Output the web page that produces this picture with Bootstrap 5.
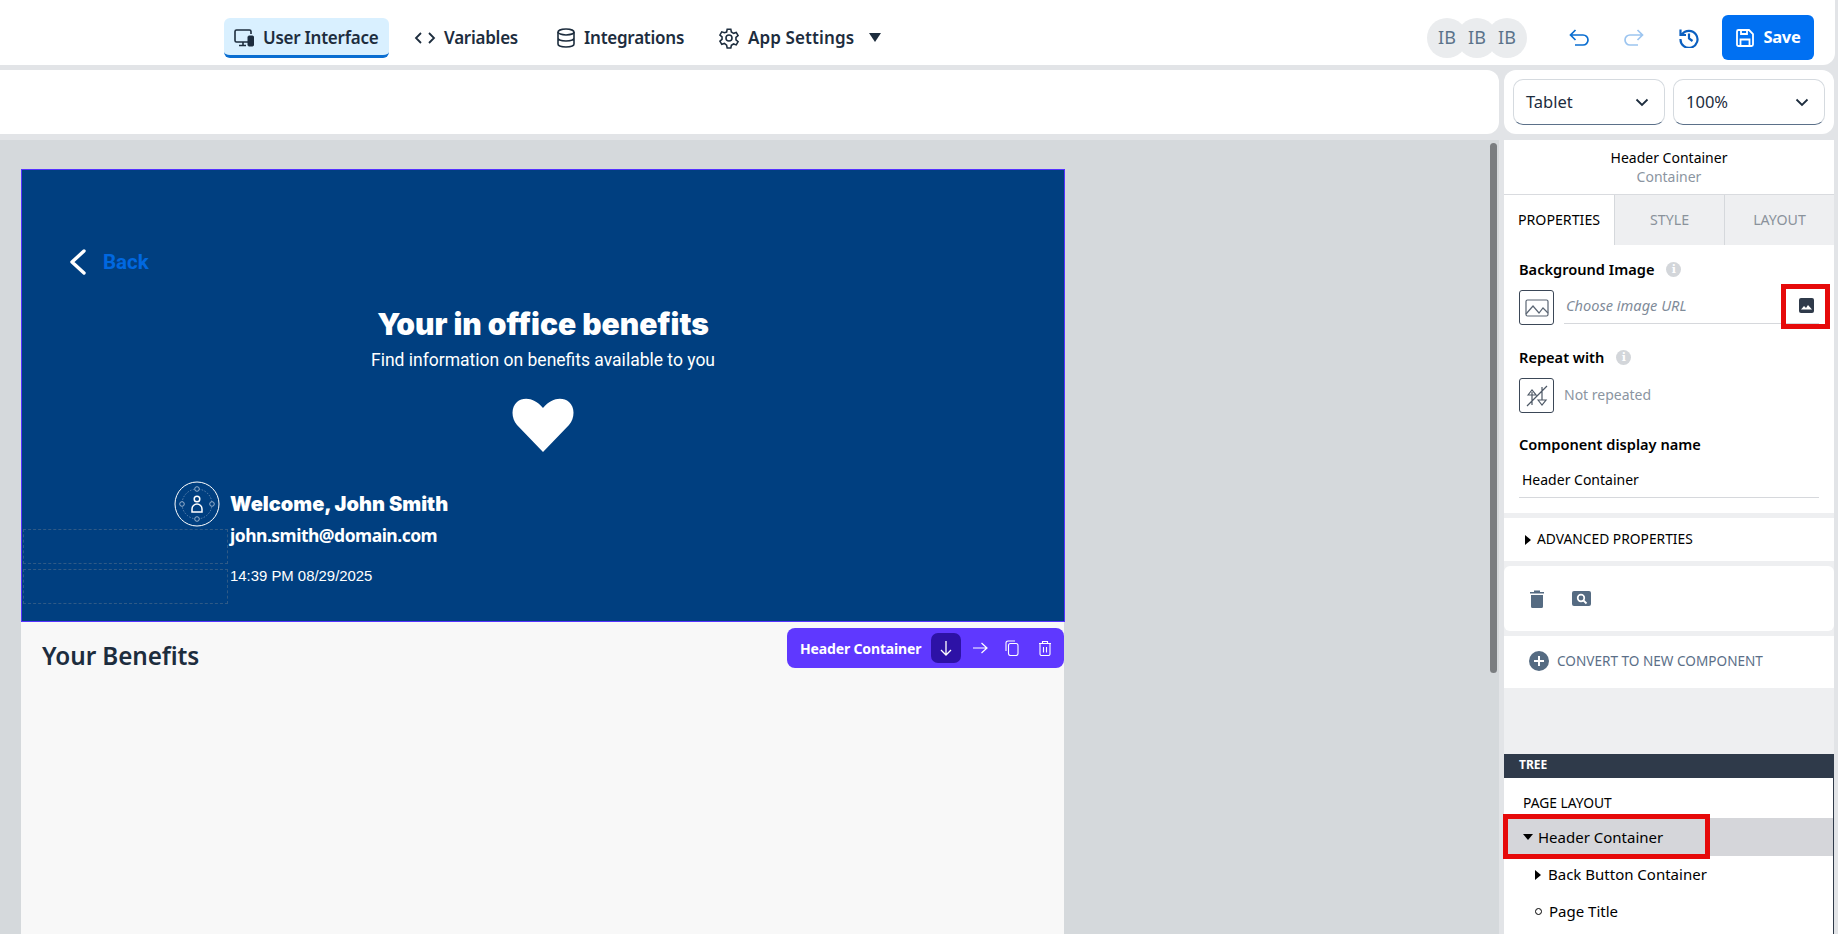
<!DOCTYPE html>
<html lang="en"><head><meta charset="utf-8"><title>Builder</title>
<link href="https://cdn.jsdelivr.net/npm/bootstrap@5.3.0/dist/css/bootstrap.min.css" rel="stylesheet">
<style>
html,body{height:100%;overflow:hidden}
body{background:#e2e4e7;font-family:"Noto Sans",sans-serif;color:#1d2d3e;font-size:14px}
.shell{width:1838px;height:934px;overflow:hidden}
.topbar{height:65px;width:1835px;background:#fff;border-radius:0 0 12px 0;padding:10px 21px 0 224px;flex:none}
.navtab{height:40px;font-size:17px;font-weight:600;letter-spacing:-.25px;color:#1d2d3e;white-space:nowrap}
.navtab.on{background:#d9f0ff;border-radius:6px;border-bottom:3px solid #0a6ed1;width:165px;padding:3px 0 0 9px}
.t2{margin-left:25px}.t3{margin-left:38px}.t4{margin-left:34px}
.t4 span{letter-spacing:.1px}
.caret-d{width:0;height:0;border:6px solid transparent;border-top:9px solid #1d2d3e;border-bottom:0;margin-left:15px}
.avas{margin-right:42px}
.ava{width:40px;height:40px;border-radius:50%;background:#eaecee;color:#5b738b;font-size:18px;margin-left:-10px}
.ava:first-child{margin-left:0}
.savebtn{width:92px;height:45px;background:#0070f2;color:#fff;border:0;border-radius:6px;font-weight:700;font-size:16.5px;letter-spacing:-.3px;margin-left:23px}
.tool{width:20px;height:20px;margin-left:35px}
.tool:first-of-type{margin-left:0}
.subrow{height:64px;margin-top:5px;flex:none}
.subleft{width:1499px;background:#fff;border-radius:0 12px 12px 0}
.subright{width:330px;margin-left:5px;background:#fff;border-radius:12px;padding:9px;gap:8px}
.selbox{width:152px;height:46px;border:1px solid #d5dadf;border-bottom:1px solid #5b7089;border-radius:10px;font-size:16.5px;padding:0 15px 0 12px;color:#1d2d3e;background:#fff}
.mainrow{height:794px;margin-top:6px;flex:none}
.canvas{width:1499px;background:#d5d9dc;position:relative;overflow:hidden}
.scroller{position:absolute;left:1490px;top:3px;width:7px;height:530px;background:#7a7d80;border-radius:4px}
.pagebox{width:1043px;margin-left:21px;margin-top:29px;background:#f8f8f8;height:766px;position:relative}
.hero{height:453px;width:1044px;background:#003f80;border:1px solid #5533ff;color:#fff;position:relative;text-align:center;padding-top:81px}
.backrow{position:absolute;left:47px;top:79px;gap:16px;color:#0068e0;font:700 20.5px/24px Roboto,sans-serif}
.herotitle{font:900 30px/34px Inter,sans-serif;margin-top:56px}
.herosub{font:400 17.5px/24px Roboto,sans-serif;margin-top:7px}
.heartwrap{margin-top:26px;height:54px}
.who{position:absolute;left:152px;top:311px;text-align:left;gap:10px}
.wname{font:900 20px/24px Inter,sans-serif;margin-top:11px}
.wmail{font:700 17.5px/24px "Noto Sans",sans-serif;margin-top:7px;letter-spacing:-.5px}
.wtime{font:400 14.9px/20px "Liberation Sans",sans-serif;margin-top:19px}
.dash{position:absolute;left:1px;width:205px;height:35px;border:1px dashed #2f5a86}
.dash1{top:359px}.dash2{top:399px}
.bentitle{font-weight:600;font-size:24.3px;line-height:32px;padding:18px 0 0 21px;color:#1d2d3e;letter-spacing:-.1px}
.ctxbar{position:absolute;left:766px;top:459px;width:277px;height:40px;background:#5f38ff;border-radius:8px;color:#fff;font-weight:700;font-size:14px;padding-left:13px;letter-spacing:-.15px}
.ctxon{width:30px;height:30px;background:#2d12a6;border-radius:7px;margin-left:10px}
.ctxic{margin-left:11px}
.ctxc{margin-left:17px}.ctxd{margin-left:19px}
.panel{width:330px;margin-left:5px;background:#eeeff1;height:794px;position:relative}
.phead{height:55px;background:#fff;text-align:center;font-size:14px;line-height:19px;padding-top:8px;border-bottom:1px solid #d9dbdf;color:#000}
.phead div+div{color:#8b95a1}
.ptabs{height:50px}
.ptab{width:110px;background:#eeeff1;color:#8a929b;font-size:14.2px;border-left:1px solid #d5d8dc;padding-bottom:1px}
.ptab.on{background:#fff;color:#000;border-left:0}
.pbody{height:268px;background:#fff;padding:15px 15px 0}
.plabel{font-weight:600;font-size:14.6px;line-height:18px;padding-bottom:2px;color:#000}
.infodot{width:15px;height:15px;border-radius:50%;background:#d3d6da;color:#fff;font:700 11px/15px "DejaVu Serif",serif;text-align:center;margin-left:12px}
.iconbox{width:35px;height:35px;border:1px solid #3b4757;border-radius:3px;flex:none}
.frow{height:35px;margin-top:10px}
.fieldline{border-bottom:1px solid #d6d8dc;margin-left:10px;flex:1;height:34px;font-style:italic;color:#7f8b99;font-size:14.6px;padding:0 5px 2px 2px}
.notrep{color:#8b95a1;margin-left:10px;font-size:14px;padding-bottom:3px}
.lab2{margin-top:23px}.lab3{margin-top:22px}
.dispname{height:43px;border-bottom:1px solid #d6d8dc;padding:15px 0 0 3px;color:#000;line-height:20px}
.sect{background:#fff;margin-top:5px}
.s1{height:43px;padding-left:21px;font-size:13.8px;color:#000;gap:6px}
.s2{height:65px;border-radius:6px;padding-left:26px;gap:28px}
.s3{height:52px;padding:0 0 2px 25px;gap:8px;font-size:13.6px;color:#5b6f88}
.spacer{height:66px}
.treehd{height:24px;background:#2f3a4a;color:#fff;font-weight:700;font-size:12px;padding:0 0 2px 15px}
.treebody{height:156px;background:#fff;border-right:1px solid #2f3a4a;color:#000;font-size:15px}
.treelbl{font-size:13.8px;height:40px;padding:16px 0 0 19px;line-height:18px}
.trow{height:38px}
.trow.on{background:#d5d6da;padding-left:19px;gap:5px}
.tr2{height:37px;padding-left:31px;gap:7px}
.tri-r{width:0;height:0;border:5px solid transparent;border-left:6px solid #000;border-right:0}
.tri-d{width:0;height:0;border:5px solid transparent;border-top:6px solid #000;border-bottom:0}
.ring{width:7px;height:7px;border:1.5px solid #000;border-radius:50%}
.redbox{position:absolute;border:5px solid #e60a0a;pointer-events:none}
.rb1{left:277px;top:144px;width:49px;height:45px}
.rb2{left:-1px;top:674px;width:207px;height:45px}
</style></head>
<body><div class="shell d-flex flex-column">
<div class="topbar d-flex align-items-center">
 <div class="navtab on d-flex align-items-center gap-2">
  <svg width="22" height="22" viewBox="0 0 22 22" fill="none" stroke="#1d2d3e" stroke-width="1.6"><path d="M15 15H3.500a1.500 1.500 0 0 1-1.500-1.500v-9A1.500 1.500 0 0 1 3.500 3h13A1.500 1.500 0 0 1 18 4.500V7"/><path d="M6 18.500h7M10 15v3"/><rect x="15" y="9" width="5.500" height="10" rx="1" fill="#1d2d3e" stroke-width="1"/></svg>
  <span>User Interface</span></div>
 <div class="navtab t2 d-flex align-items-center gap-2"><svg width="22" height="22" viewBox="0 0 22 22" fill="none" stroke="#1d2d3e" stroke-width="1.8"><path d="M7 6l-5 5 5 5M15 6l5 5-5 5"/></svg><span>Variables</span></div>
 <div class="navtab t3 d-flex align-items-center gap-2"><svg width="20" height="22" viewBox="0 0 20 22" fill="none" stroke="#1d2d3e" stroke-width="1.6"><ellipse cx="10" cy="5" rx="8" ry="3"/><path d="M2 5v12c0 1.700 3.600 3 8 3s8-1.300 8-3V5M2 11c0 1.700 3.600 3 8 3s8-1.300 8-3"/></svg><span>Integrations</span></div>
 <div class="navtab t4 d-flex align-items-center gap-2"><svg width="22" height="22" viewBox="0 0 24 24" fill="none" stroke="#1d2d3e" stroke-width="1.7"><circle cx="12" cy="12" r="3.300"/><path d="M10 2.500h4l.6 3 2.400 1.400 2.900-1 2 3.400-2.300 2 0 2.800 2.300 2-2 3.400-2.900-1-2.400 1.400-.6 3h-4l-.6-3L7 17.900l-2.900 1-2-3.400 2.300-2v-2.800l-2.300-2 2-3.400 2.900 1L9.400 5.500z"/></svg><span>App Settings</span></div>
 <div class="caret-d"></div>
 <div class="ms-auto d-flex align-items-center">
  <div class="avas d-flex"><div class="ava d-flex align-items-center justify-content-center">IB</div><div class="ava d-flex align-items-center justify-content-center">IB</div><div class="ava d-flex align-items-center justify-content-center">IB</div></div>
  <svg class="tool" viewBox="0 0 20 20" fill="none" stroke="#0a6ed1" stroke-width="1.700"><path d="M6.500 2L1.500 7l5 5M1.500 7H14a4.700 4.700 0 0 1 0 10H6"/></svg>
  <svg class="tool" viewBox="0 0 20 20" fill="none" stroke="#9cc5f0" stroke-width="1.700"><path d="M13.500 2l5 5-5 5M18.500 7H6a4.700 4.700 0 0 0 0 10h8"/></svg>
  <svg class="tool" viewBox="0 0 20 20" fill="none" stroke="#0a5fc0" stroke-width="2.200"><path d="M3 6.500A8.500 8.500 0 1 1 1.500 11M1.500 1.500V7H7M10 5.500V10.500l3.500 2.500"/></svg>
  <button class="savebtn d-flex align-items-center justify-content-center gap-2"><svg width="20" height="20" viewBox="0 0 20 20" fill="none" stroke="#fff" stroke-width="1.800"><path d="M2 3.500A1.500 1.500 0 0 1 3.500 2H14l4 4v10.500a1.500 1.500 0 0 1-1.500 1.500h-13A1.500 1.500 0 0 1 2 16.500z"/><path d="M5.500 18v-6.500h9V18M6 2v4h6V2"/></svg>Save</button>
 </div>
</div>
<div class="subrow d-flex">
 <div class="subleft"></div>
 <div class="subright d-flex align-items-center">
  <div class="selbox d-flex align-items-center justify-content-between">Tablet<svg width="14" height="9" viewBox="0 0 14 9" fill="none" stroke="#1d2d3e" stroke-width="1.800"><path d="M1.500 1.500L7 7l5.500-5.500"/></svg></div>
  <div class="selbox d-flex align-items-center justify-content-between">100%<svg width="14" height="9" viewBox="0 0 14 9" fill="none" stroke="#1d2d3e" stroke-width="1.800"><path d="M1.500 1.500L7 7l5.500-5.500"/></svg></div>
 </div>
</div>
<div class="mainrow d-flex">
 <div class="canvas">
  <div class="scroller"></div>
  <div class="pagebox">
   <div class="hero">
    <div class="backrow d-flex align-items-center"><svg width="18" height="26" viewBox="0 0 18 26" fill="none" stroke="#fff" stroke-width="3.400" stroke-linecap="round" stroke-linejoin="round"><path d="M15 2L3 13l12 11"/></svg><span>Back</span></div>
    <div class="herotitle">Your in office benefits</div>
    <div class="herosub">Find information on benefits available to you</div>
    <div class="heartwrap"><svg width="62" height="54" viewBox="0 0 62 54"><path fill="#fff" d="M31 54L5 27C-1 20-1 9 5 4c6-5 17-5 26 6C40-1 51-1 57 4c6 5 6 16 0 23z"/></svg></div>
    <div class="dash dash1"></div><div class="dash dash2"></div>
    <div class="who d-flex">
     <svg width="46" height="46" viewBox="0 0 46 46" fill="none" stroke="#fff"><circle cx="23" cy="23" r="22" stroke-width="1"/><circle cx="23" cy="23" r="15" stroke="#7e9cbf" stroke-width=".7" stroke-dasharray="1.500 1.500"/><circle cx="23" cy="8" r="2.300" stroke="#b9cadd" fill="#003f80" stroke-width=".8"/><circle cx="23" cy="38" r="2.300" stroke="#b9cadd" fill="#003f80" stroke-width=".8"/><circle cx="8" cy="23" r="2.300" stroke="#b9cadd" fill="#003f80" stroke-width=".8"/><circle cx="38" cy="23" r="2.300" stroke="#b9cadd" fill="#003f80" stroke-width=".8"/><circle cx="23" cy="18" r="2.800" stroke-width="1.500"/><path d="M18 31v-3a5 5 0 0 1 10 0v3z" stroke-width="1.500"/></svg>
     <div><div class="wname">Welcome, John Smith</div><div class="wmail">john.smith@domain.com</div><div class="wtime">14:39 PM 08/29/2025</div></div>
    </div>
   </div>
   <div class="bentitle">Your Benefits</div>
   <div class="ctxbar d-flex align-items-center"><span>Header Container</span>
    <div class="ctxon d-flex align-items-center justify-content-center"><svg width="14" height="16" viewBox="0 0 14 16" fill="none" stroke="#fff" stroke-width="1.300"><path d="M7 1v14M2 10l5 5 5-5"/></svg></div>
    <svg class="ctxic" width="16" height="14" viewBox="0 0 16 14" fill="none" stroke="#fff" stroke-width="1.200"><path d="M1 7h14M9.500 2l5.500 5-5.500 5"/></svg>
    <svg class="ctxic ctxc" width="14" height="16" viewBox="0 0 14 16" fill="none" stroke="#fff" stroke-width="1.100"><rect x="3.500" y="3.500" width="9.500" height="12" rx="2"/><path d="M1 11V3a2 2 0 0 1 2-2h7"/></svg>
    <svg class="ctxic ctxd" width="14" height="16" viewBox="0 0 14 16" fill="none" stroke="#fff" stroke-width="1.100"><path d="M1 3.500h12M4.500 3.500V1.500h5v2M2 3.500v10.500a1.500 1.500 0 0 0 1.500 1.500h7A1.500 1.500 0 0 0 12 14V3.500M5.500 7v5.500M8.500 7v5.500"/></svg>
   </div>
  </div>
 </div>
 <div class="panel">
  <div class="phead"><div>Header Container</div><div>Container</div></div>
  <div class="ptabs d-flex"><div class="ptab on d-flex align-items-center justify-content-center">PROPERTIES</div><div class="ptab d-flex align-items-center justify-content-center">STYLE</div><div class="ptab d-flex align-items-center justify-content-center">LAYOUT</div></div>
  <div class="pbody">
   <div class="d-flex align-items-center plabel">Background Image<span class="infodot">i</span></div>
   <div class="d-flex frow">
    <div class="iconbox d-flex align-items-center justify-content-center"><svg width="24" height="18" viewBox="0 0 24 18" fill="none" stroke="#5a6573" stroke-width="1.200"><rect x="1" y="1" width="22" height="16" rx="1.500"/><path d="M1 15l7-8 6 7 4-5 5 5"/></svg></div>
    <div class="fieldline d-flex align-items-center justify-content-between">Choose image URL<svg width="15" height="15" viewBox="0 0 15 15"><rect width="15" height="15" rx="2" fill="#2f3a4a"/><path fill="#fff" d="M2 11.500l3-3.500 2 2 2-3 4 4.500z"/></svg></div>
   </div>
   <div class="d-flex align-items-center plabel lab2">Repeat with<span class="infodot">i</span></div>
   <div class="d-flex frow">
    <div class="iconbox d-flex align-items-center justify-content-center"><svg width="24" height="22" viewBox="0 0 24 22" fill="none" stroke="#4c5765" stroke-width="1.200"><path d="M22 1L2 21M7 20V7M3 10l4-5 4 5zM17 2v13M13 15l4 5 4-5z"/></svg></div>
    <div class="d-flex align-items-center notrep">Not repeated</div>
   </div>
   <div class="plabel lab3">Component display name</div>
   <div class="dispname">Header Container</div>
  </div>
  <div class="sect s1 d-flex align-items-center"><div class="tri-r"></div>ADVANCED PROPERTIES</div>
  <div class="sect s2 d-flex align-items-center">
   <svg width="14" height="18" viewBox="0 0 14 18" fill="#556b82"><path d="M0 2h14v1.500H0zM4 .5h6V2H4zM1 5h12v11.500a1.500 1.500 0 0 1-1.500 1.500h-9A1.500 1.500 0 0 1 1 16.500z"/></svg>
   <svg width="19" height="15" viewBox="0 0 19 15"><rect width="19" height="15" rx="2" fill="#556b82"/><circle cx="9" cy="7" r="3.300" fill="none" stroke="#fff" stroke-width="1.700"/><path d="M11.500 9.500l3 3" stroke="#fff" stroke-width="1.800"/></svg>
  </div>
  <div class="sect s3 d-flex align-items-center"><svg width="20" height="20" viewBox="0 0 20 20"><circle cx="10" cy="10" r="10" fill="#556b82"/><path d="M10 5v10M5 10h10" stroke="#fff" stroke-width="2"/></svg>CONVERT TO NEW COMPONENT</div>
  <div class="spacer"></div>
  <div class="treehd d-flex align-items-center">TREE</div>
  <div class="treebody">
   <div class="treelbl">PAGE LAYOUT</div>
   <div class="trow on d-flex align-items-center"><div class="tri-d"></div>Header Container</div>
   <div class="trow tr2 d-flex align-items-center"><div class="tri-r"></div>Back Button Container</div>
   <div class="trow tr2 d-flex align-items-center"><div class="ring"></div>Page Title</div>
  </div>
  <div class="redbox rb1"></div><div class="redbox rb2"></div>
 </div>
</div>
</div>
<script src="https://cdn.jsdelivr.net/npm/bootstrap@5.3.0/dist/js/bootstrap.bundle.min.js"></script>
</body></html>
